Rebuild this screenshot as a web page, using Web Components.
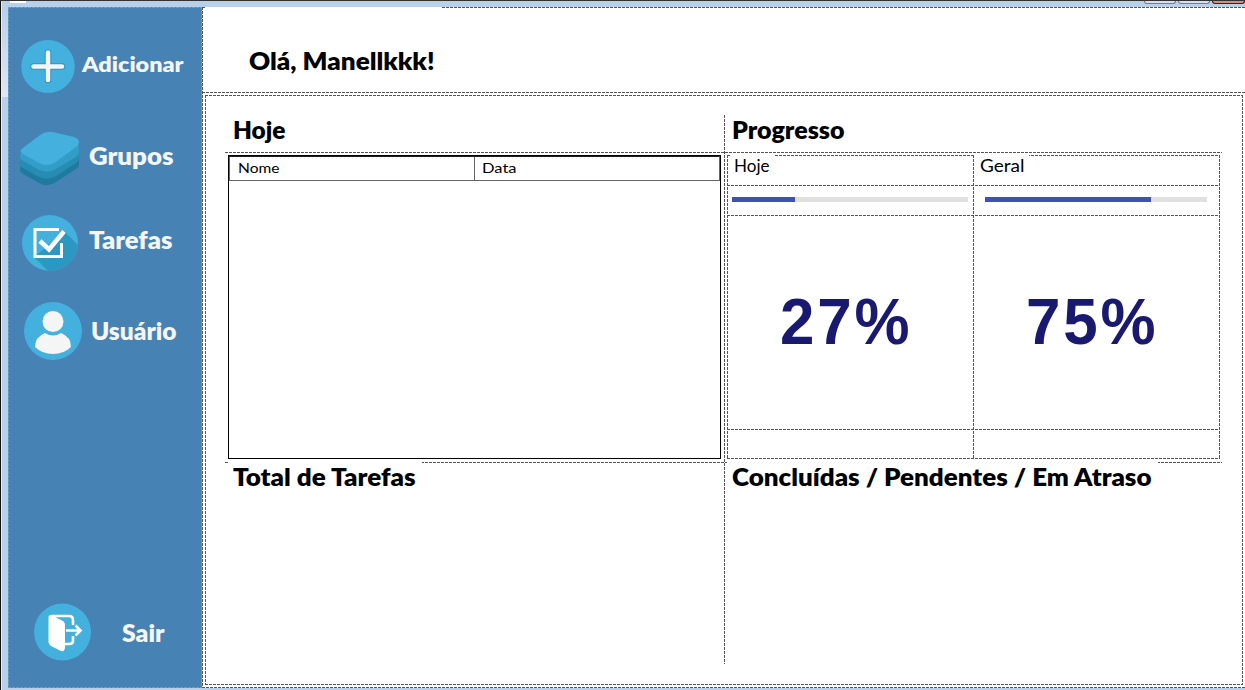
<!DOCTYPE html>
<html lang="pt">
<head>
<meta charset="utf-8">
<title>Tarefas</title>
<style>
html,body{margin:0;height:100%;overflow:hidden}
body{font-family:Lato,"Century Gothic",sans-serif;color:#000;
--h:repeating-linear-gradient(90deg,#555 0 3px,transparent 3px 4px);
--v:repeating-linear-gradient(180deg,#555 0 3px,transparent 3px 4px);
--sh:repeating-linear-gradient(90deg,#6a9fcc 0 3px,transparent 3px 4px);
--sv:repeating-linear-gradient(180deg,#6a9fcc 0 3px,transparent 3px 4px)}
</style>
</head>
<body>
<app-window>
  <side-bar slot="side">
    <side-item style="height:53px;padding-left:13px;--gap:7px;--lift:4px">
      <svg slot="icon" width="54" height="53" viewBox="0 0 54 53"><ellipse cx="27" cy="26.5" rx="26.8" ry="26.5" fill="#43b0dd"/><path d="M27 12.500V40M12.500 26.500H41" stroke="#2f95c4" stroke-width="6.500" stroke-linecap="round"/><path d="M27 12.500V40M12.500 26.500H41" stroke="#f5f5f5" stroke-width="4.500" stroke-linecap="round"/></svg>
      <fit-text w="100" style="font-size:21px">Adicionar</fit-text>
    </side-item>
    <side-item style="height:56px;margin-top:38px;padding-left:12px;--gap:10px;--lift:7px">
      <svg slot="icon" width="59" height="56" viewBox="0 0 59 56"><path d="M0 37Q0 35 3 33L21 21Q27 17 34 19L54 24Q59 26 59 29V33Q59 36 56 38L36 51Q28 57 19 52L3 43Q0 41 0 39Z" fill="#1f7a9f"/><path d="M0 31Q0 29 3 27L21 15L54 18Q59 20 59 23V27Q59 30 56 32L36 45Q28 50 19 46L3 37Q0 35 0 33Z" fill="#278cb3"/><path d="M0 24Q0 22 3 20L21 10L54 11Q59 13 59 16V21Q59 24 56 26L36 38Q28 43 19 39L3 30Q0 28 0 26Z" fill="#319dc8"/><path d="M3 17L20 4Q27 -1 35 1.500L54 6Q59 8 59 11Q59 14 56 16L37 30Q28 37 19 32L3 23Q-2 20 3 17Z" fill="#43b0dd"/></svg>
      <fit-text w="83" style="font-size:24px">Grupos</fit-text>
    </side-item>
    <side-item style="height:56px;margin-top:28px;padding-left:14px;--gap:11px;--lift:6px">
      <svg slot="icon" width="56" height="56" viewBox="0 0 56 56"><defs><clipPath id="c"><circle cx="28" cy="28" r="28"/></clipPath></defs><circle cx="28" cy="28" r="28" fill="#43b0dd"/><path clip-path="url(#c)" d="M12 42L43 17L60 34V60H30Z" fill="#2c97c0"/><path d="M37 14.500H13V41.500H39.500V28" fill="none" stroke="#fff" stroke-width="3"/><path d="M18 26L27 34.500L42 16.500" fill="none" stroke="#fff" stroke-width="4.500"/></svg>
      <fit-text w="82" style="font-size:24px">Tarefas</fit-text>
    </side-item>
    <side-item style="height:58px;margin-top:31px;padding-left:16px;--gap:9px;--lift:0px">
      <svg slot="icon" width="58" height="58" viewBox="0 0 58 58"><circle cx="29" cy="29" r="29" fill="#43b0dd"/><path d="M11 45Q11 35 21 31Q29 36 37 31Q47 35 47 45Q40 52 29 52Q18 52 11 45Z" fill="#f5f5f5"/><circle cx="29" cy="19.500" r="10.500" fill="#f5f5f5"/></svg>
      <fit-text w="84" style="font-size:24px">Usuário</fit-text>
    </side-item>
    <side-item style="height:58px;margin-top:auto;padding-left:26px;--gap:31px;--lift:0px;--drop:2px">
      <svg slot="icon" width="57" height="58" viewBox="0 0 57 58"><circle cx="28.500" cy="29" r="28.500" fill="#43b0dd"/><path d="M17 13H35Q39 13 39 17V22M39 33V38Q39 41 35 41H30" fill="none" stroke="#fff" stroke-width="2.600"/><path d="M14.500 15Q14.500 10.500 18 12.500L28 17.500Q31 19 31 22V44Q31 49 27 48L17 43Q14.500 41.500 14.500 39Z" fill="#fff"/><path d="M32 27.500H46M41.500 22.500L46.500 27.500L41.500 32.500" fill="none" stroke="#fff" stroke-width="2.600"/></svg>
      <fit-text w="41" style="font-size:24px">Sair</fit-text>
    </side-item>
  </side-bar>
  <greeting-bar slot="main"><fit-text w="184">Olá, Manellkkk!</fit-text></greeting-bar>
  <content-panel slot="main">
    <section-title slot="a"><fit-text w="51">Hoje</fit-text></section-title>
    <section-title slot="b"><fit-text w="111">Progresso</fit-text></section-title>
    <task-list slot="c"><fit-text slot="n" w="40">Nome</fit-text><fit-text slot="d" w="33">Data</fit-text></task-list>
    <progress-panel slot="d">
      <fit-text slot="l1" w="34">Hoje</fit-text><fit-text slot="l2" w="43">Geral</fit-text>
      <progress-bar slot="p1" style="--from:4px;--size:236px;--val:63px"></progress-bar>
      <progress-bar slot="p2" style="--from:11px;--size:222px;--val:166px"></progress-bar>
      <fit-text slot="v1" w="131">27%</fit-text><fit-text slot="v2" w="131">75%</fit-text>
    </progress-panel>
    <section-title slot="e" style="--cover:194px"><fit-text w="181">Total de Tarefas</fit-text></section-title>
    <section-title slot="f" style="--cover:431px"><fit-text w="418">Concluídas / Pendentes / Em Atraso</fit-text></section-title>
  </content-panel>
</app-window>
<script>
const define=(name,html,ready)=>customElements.define(name,class extends HTMLElement{
  constructor(){super();this.attachShadow({mode:'open'}).innerHTML=html}
  connectedCallback(){if(ready)ready(this)}
});
define('app-window',`<style>
:host{display:grid;box-sizing:border-box;width:1245px;height:690px;grid-template:7px 681px 2px/8px 194px 1fr;background:linear-gradient(#111,#111) 0 0/1px 100% no-repeat,linear-gradient(#e8eef6,#e8eef6) 1px 0/1px 100% no-repeat,linear-gradient(#b9d0eb,#dfe7f3) 2px 7px/6px 90px no-repeat,#b9d0eb}
.top{grid-column:1/4;display:flex;justify-content:flex-end;gap:2px;border-top:1px solid #333;height:6px}
.top i{box-sizing:border-box;width:32px;height:3px;background:#d5e0f2;border:1px solid #727d92;border-top:0;border-radius:0 0 3px 3px}
.top i:first-child{width:16px;height:2px;border:0;background:#fff;margin:0 auto 0 10px;border-radius:0}
.top i:last-child{background:#d88b7e;border-color:#411a24;width:33px}
.side{grid-area:2/2}.main{grid-area:2/3;display:flex;flex-direction:column;background:var(--v) 0 0/1px 100% no-repeat,var(--h) 0 100%/100% 1px no-repeat,#fff}
</style><div class="top"><i></i><i></i><i></i><i></i></div><div class="side"><slot name="side"></slot></div><div class="main"><slot name="main"></slot></div>`);
define('side-bar',`<style>:host{display:flex;flex-direction:column;box-sizing:border-box;height:681px;padding:33px 0 27px;background:var(--sh) 0 0/100% 1px no-repeat,var(--sh) 0 100%/100% 1px no-repeat,var(--sv) 0 0/1px 100% no-repeat,var(--sv) 100% 0/1px 100% no-repeat,#4682b4;color:#f5f5f5;font-weight:800}</style><slot></slot>`);
define('side-item',`<style>:host{display:flex;align-items:center;gap:var(--gap);box-sizing:border-box;flex:none}.l{padding-top:var(--drop,0);padding-bottom:var(--lift)}::slotted(svg){display:block;flex:none}</style><slot name="icon"></slot><div class="l"><slot></slot></div>`);
define('fit-text',`<style>:host{display:inline-block;white-space:nowrap;line-height:1.25}span{display:inline-block;transform-origin:0 50%}</style><span><slot></slot></span>`,el=>{
  const s=el.shadowRoot.querySelector('span');
  requestAnimationFrame(()=>{const w=s.getBoundingClientRect().width;s.style.transform='scaleX('+((+el.getAttribute('w')+1.5)/w)+')'});
});
define('greeting-bar',`<style>:host{display:block;box-sizing:border-box;height:86px;padding:39px 0 0 47px;font-size:24px;font-weight:800;background:var(--h) 0 0/3px 1px no-repeat,var(--h) 240px 0/100% 1px no-repeat,var(--h) 0 100%/100% 1px no-repeat}</style><slot></slot>`);
define('content-panel',`<style>
:host{display:block;box-sizing:border-box;margin:2px 2px 0 3px;height:590px;padding:20px 21px 21px 20px;background:var(--h) 0 0/100% 1px no-repeat,var(--h) 0 100%/100% 1px no-repeat,var(--v) 0 0/1px 100% no-repeat,var(--v) 100% 0/1px 100% no-repeat}
.g{display:grid;width:997px;height:549px;grid-template:37px 310px 1fr/499px 1fr;background:var(--v) 499px 0/1px 100% no-repeat,var(--h) 0 37px/100% 1px no-repeat,var(--h) 0 347px/100% 1px no-repeat}
</style><div class="g"><slot name="a"></slot><slot name="b"></slot><slot name="c"></slot><slot name="d"></slot><slot name="e"></slot><slot name="f"></slot></div>`);
define('section-title',`<style>:host{display:block;box-sizing:border-box;margin-left:3px;width:var(--cover,300px);height:30px;padding-left:5px;font-size:24px;line-height:30px;font-weight:800;background:#fff}</style><slot></slot>`);
define('task-list',`<style>:host{display:block;box-sizing:border-box;margin:3px 0 0 3px;width:493px;height:304px;border:1px solid #000}
.r{display:grid;grid-template-columns:245px 1fr;box-sizing:border-box;height:25px;border-top:1px solid #222;border-bottom:1px solid #666;border-right:1px solid #666;font-size:13.500px}
.r div{padding:3px 0 0 8px;border-left:1px solid #666}.r div+div{padding-left:7px}</style><div class="r"><div><slot name="n"></slot></div><div><slot name="d"></slot></div></div>`);
define('progress-panel',`<style>:host{display:grid;box-sizing:border-box;margin:3px 0 0 3px;width:493px;height:304px;grid-template:30px 30px 214px 1fr/246px 1fr;
background:var(--h) 0 0/100% 1px no-repeat,var(--h) 0 30px/100% 1px no-repeat,var(--h) 0 60px/100% 1px no-repeat,var(--h) 0 274px/100% 1px no-repeat,var(--h) 0 100%/100% 1px no-repeat,var(--v) 0 0/1px 100% no-repeat,var(--v) 246px 0/1px 100% no-repeat,var(--v) 100% 0/1px 100% no-repeat}
.l{box-sizing:border-box;margin-left:3px;width:44px;height:25px;padding:1px 0 0 4px;font-size:16.500px;background:#fff}.l+.l{margin-left:2px;width:54px;padding-left:5px}
.v{padding:66px 0 0 53px;font:700 65px "Liberation Sans",Arial,sans-serif;letter-spacing:3px;color:#191970}.v+.v{padding-left:53px}</style>
<div class="l"><slot name="l1"></slot></div><div class="l"><slot name="l2"></slot></div><slot name="p1"></slot><slot name="p2"></slot><div class="v"><slot name="v1"></slot></div><div class="v"><slot name="v2"></slot></div>`);
define('progress-bar',`<style>:host{display:block;width:var(--size);height:5px;margin:12px 0 0 var(--from);margin-left:calc(var(--from) + 1px);background:#e0e0e0}i{display:block;width:var(--val);height:5px;background:#3f51b5}</style><i></i>`);
</script>
</body>
</html>
